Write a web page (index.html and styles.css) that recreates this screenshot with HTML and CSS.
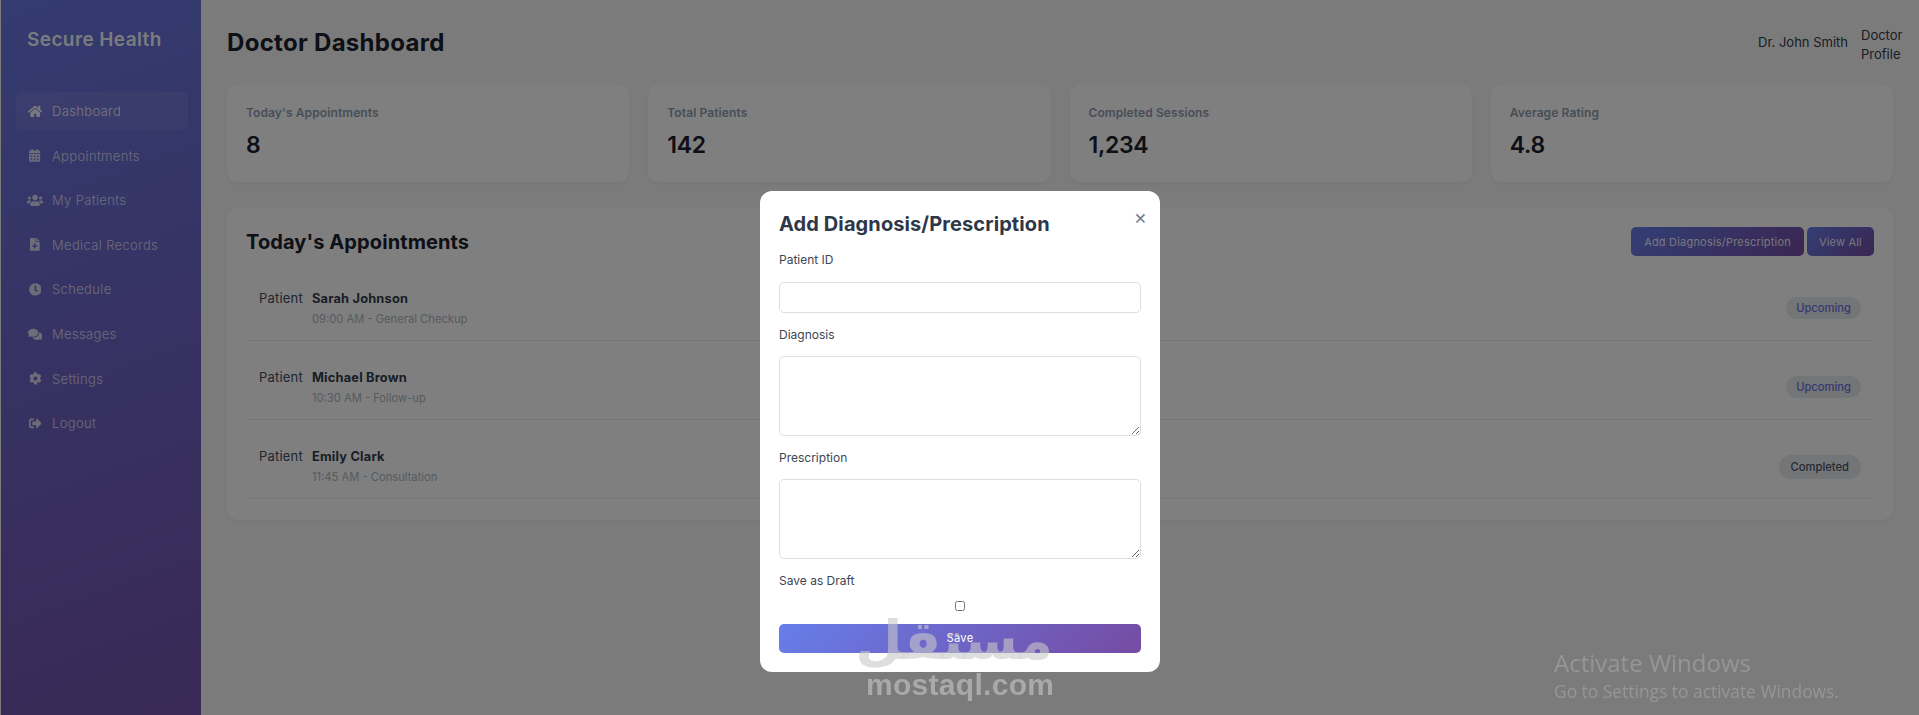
FILE: index.html

```html
<!DOCTYPE html>
<html lang="en">
<head>
  <meta charset="UTF-8" />
  <meta name="viewport" content="width=device-width, initial-scale=1.0" />
  <title>Doctor Dashboard</title>
  <link rel="stylesheet" href="styles.css">
</head>
<body>
  <div class="layout">
    <aside class="sidebar">
      <div class="logo">Secure Health</div>
      <nav class="nav">
        <a href="#" class="nav-item active">
          <span class="nav-icon"><svg viewBox="0 0 576 512"><path d="M280.37 148.26L96 300.11V464a16 16 0 0 0 16 16l112.06-.29a16 16 0 0 0 15.92-16V368a16 16 0 0 1 16-16h64a16 16 0 0 1 16 16v95.64a16 16 0 0 0 16 16.05L464 480a16 16 0 0 0 16-16V300L295.67 148.26a12.19 12.19 0 0 0-15.3 0zM571.6 251.47L488 182.56V44.05a12 12 0 0 0-12-12h-56a12 12 0 0 0-12 12v72.61L318.47 43a48 48 0 0 0-61 0L4.34 251.47a12 12 0 0 0-1.6 16.9l25.5 31A12 12 0 0 0 45.15 301l235.22-193.74a12.19 12.19 0 0 1 15.3 0L530.9 301a12 12 0 0 0 16.9-1.6l25.5-31a12 12 0 0 0-1.7-16.93z"/></svg></span>
          Dashboard
        </a>
        <a href="#" class="nav-item">
          <span class="nav-icon"><svg viewBox="0 0 448 512"><path d="M0 464c0 26.5 21.5 48 48 48h352c26.5 0 48-21.5 48-48V192H0v272zm320-196c0-6.6 5.4-12 12-12h40c6.6 0 12 5.4 12 12v40c0 6.6-5.4 12-12 12h-40c-6.6 0-12-5.4-12-12v-40zm0 128c0-6.6 5.4-12 12-12h40c6.6 0 12 5.4 12 12v40c0 6.6-5.4 12-12 12h-40c-6.6 0-12-5.4-12-12v-40zM192 268c0-6.6 5.4-12 12-12h40c6.6 0 12 5.4 12 12v40c0 6.6-5.4 12-12 12h-40c-6.6 0-12-5.4-12-12v-40zm0 128c0-6.6 5.4-12 12-12h40c6.6 0 12 5.4 12 12v40c0 6.6-5.4 12-12 12h-40c-6.6 0-12-5.4-12-12v-40zM64 268c0-6.6 5.4-12 12-12h40c6.6 0 12 5.4 12 12v40c0 6.6-5.4 12-12 12H76c-6.6 0-12-5.4-12-12v-40zm0 128c0-6.6 5.4-12 12-12h40c6.6 0 12 5.4 12 12v40c0 6.6-5.4 12-12 12H76c-6.6 0-12-5.4-12-12v-40zM400 64h-48V16c0-8.8-7.2-16-16-16h-32c-8.8 0-16 7.2-16 16v48H160V16c0-8.8-7.2-16-16-16h-32c-8.8 0-16 7.2-16 16v48H48C21.5 64 0 85.5 0 112v48h448v-48c0-26.5-21.5-48-48-48z"/></svg></span>
          Appointments
        </a>
        <a href="#" class="nav-item">
          <span class="nav-icon"><svg viewBox="0 0 640 512"><path d="M96 224c35.3 0 64-28.7 64-64s-28.7-64-64-64-64 28.7-64 64 28.7 64 64 64zm448 0c35.3 0 64-28.7 64-64s-28.7-64-64-64-64 28.7-64 64 28.7 64 64 64zm32 32h-64c-17.6 0-33.5 7.1-45.1 18.6 40.3 22.1 68.9 62 75.1 109.4h66c17.7 0 32-14.3 32-32v-32c0-35.3-28.7-64-64-64zm-256 0c61.9 0 112-50.1 112-112S381.9 32 320 32 208 82.1 208 144s50.1 112 112 112zm76.8 32h-8.3c-20.8 10-43.9 16-68.5 16s-47.6-6-68.5-16h-8.3C179.6 288 128 339.6 128 403.2V432c0 26.5 21.5 48 48 48h288c26.5 0 48-21.5 48-48v-28.8c0-63.6-51.6-115.2-115.2-115.2zm-223.7-13.4C161.5 263.1 145.6 256 128 256H64c-35.3 0-64 28.7-64 64v32c0 17.7 14.3 32 32 32h65.9c6.3-47.4 34.9-87.3 75.2-109.4z"/></svg></span>
          My Patients
        </a>
        <a href="#" class="nav-item">
          <span class="nav-icon"><svg viewBox="0 0 384 512"><path d="M377 105L279.1 7c-4.5-4.5-10.6-7-17-7H256v128h128v-6.1c0-6.3-2.5-12.4-7-16.9zm-153 31V0H24C10.7 0 0 10.7 0 24v464c0 13.3 10.7 24 24 24h336c13.3 0 24-10.7 24-24V160H248c-13.2 0-24-10.8-24-24zm64 160v48c0 4.4-3.6 8-8 8h-56v56c0 4.4-3.6 8-8 8h-48c-4.4 0-8-3.6-8-8v-56h-56c-4.4 0-8-3.6-8-8v-48c0-4.4 3.6-8 8-8h56v-56c0-4.4 3.6-8 8-8h48c4.4 0 8 3.6 8 8v56h56c4.4 0 8 3.6 8 8z"/></svg></span>
          Medical Records
        </a>
        <a href="#" class="nav-item">
          <span class="nav-icon"><svg viewBox="0 0 512 512"><path d="M256,8C119,8,8,119,8,256S119,504,256,504,504,393,504,256,393,8,256,8Zm92.49,313h0l-20,25a16,16,0,0,1-22.49,2.5h0l-67-49.72a40,40,0,0,1-15-31.23V112a16,16,0,0,1,16-16h32a16,16,0,0,1,16,16V256l58,42.5A16,16,0,0,1,348.49,321Z"/></svg></span>
          Schedule
        </a>
        <a href="#" class="nav-item">
          <span class="nav-icon"><svg viewBox="0 0 576 512"><path d="M416 192c0-88.4-93.1-160-208-160S0 103.6 0 192c0 34.3 14.1 65.9 38 92-13.4 30.2-35.5 54.2-35.8 54.5-2.2 2.3-2.8 5.7-1.5 8.7S4.8 352 8 352c36.6 0 66.9-12.3 88.7-25 32.2 15.7 70.3 25 111.3 25 114.9 0 208-71.6 208-160zm122 220c23.9-26 38-57.7 38-92 0-66.9-53.5-124.2-129.3-148.1.9 6.6 1.3 13.3 1.3 20.1 0 105.9-107.7 192-240 192-10.8 0-21.3-.8-31.7-1.9C207.8 439.6 281.8 480 368 480c41 0 79.1-9.2 111.3-25 21.8 12.7 52.1 25 88.7 25 3.2 0 6.1-1.9 7.3-4.8 1.3-2.9.7-6.3-1.5-8.7-.3-.3-22.4-24.2-35.8-54.5z"/></svg></span>
          Messages
        </a>
        <a href="#" class="nav-item">
          <span class="nav-icon"><svg viewBox="0 0 512 512"><path d="M487.4 315.7l-42.6-24.6c4.3-23.2 4.3-47 0-70.2l42.6-24.6c4.9-2.8 7.1-8.6 5.5-14-11.1-35.6-30-67.8-54.7-94.6-3.8-4.1-10-5.1-14.8-2.3L380.8 110c-17.9-15.4-38.5-27.3-60.8-35.1V25.8c0-5.6-3.9-10.5-9.4-11.7-36.7-8.2-74.3-7.8-109.2 0-5.5 1.2-9.4 6.1-9.4 11.7V75c-22.2 7.9-42.8 19.8-60.8 35.1L88.7 85.5c-4.9-2.8-11-1.9-14.8 2.3-24.7 26.7-43.6 58.9-54.7 94.6-1.7 5.4.6 11.2 5.5 14L67.3 221c-4.3 23.2-4.3 47 0 70.2l-42.6 24.6c-4.9 2.8-7.1 8.6-5.5 14 11.1 35.6 30 67.8 54.7 94.6 3.8 4.1 10 5.1 14.8 2.3l42.6-24.6c17.9 15.4 38.5 27.3 60.8 35.1v49.2c0 5.6 3.9 10.5 9.4 11.7 36.7 8.2 74.3 7.8 109.2 0 5.5-1.2 9.4-6.1 9.4-11.7v-49.2c22.2-7.9 42.8-19.8 60.8-35.1l42.6 24.6c4.9 2.8 11 1.9 14.8-2.3 24.7-26.7 43.6-58.9 54.7-94.6 1.5-5.5-.7-11.3-5.6-14.1zM256 336c-44.1 0-80-35.9-80-80s35.9-80 80-80 80 35.9 80 80-35.9 80-80 80z"/></svg></span>
          Settings
        </a>
        <a href="#" class="nav-item">
          <span class="nav-icon"><svg viewBox="0 0 512 512"><path d="M497 273L329 441c-15 15-41 4.5-41-17v-96H152c-13.3 0-24-10.7-24-24v-96c0-13.3 10.7-24 24-24h136V88c0-21.4 25.9-32 41-17l168 168c9.3 9.4 9.3 24.6 0 34zM192 436v-40c0-6.6-5.4-12-12-12H96c-17.7 0-32-14.3-32-32V160c0-17.7 14.3-32 32-32h84c6.6 0 12-5.4 12-12V76c0-6.6-5.4-12-12-12H96c-53 0-96 43-96 96v192c0 53 43 96 96 96h84c6.6 0 12-5.4 12-12z"/></svg></span>
          Logout
        </a>
      </nav>
    </aside>

    <main class="main">
      <header class="header">
        <h1>Doctor Dashboard</h1>
        <div class="user">
          <span>Dr. John Smith</span>
          <span class="user-role">Doctor Profile</span>
        </div>
      </header>

      <section class="stats">
        <div class="stat-card">
          <div class="stat-label">Today's Appointments</div>
          <div class="stat-value">8</div>
        </div>
        <div class="stat-card">
          <div class="stat-label">Total Patients</div>
          <div class="stat-value">142</div>
        </div>
        <div class="stat-card">
          <div class="stat-label">Completed Sessions</div>
          <div class="stat-value">1,234</div>
        </div>
        <div class="stat-card">
          <div class="stat-label">Average Rating</div>
          <div class="stat-value">4.8</div>
        </div>
      </section>

      <section class="panel">
        <div class="panel-head">
          <h2>Today's Appointments</h2>
          <div class="panel-actions">
            <button class="btn">Add Diagnosis/Prescription</button>
            <button class="btn btn-small">View All</button>
          </div>
        </div>

        <div class="appt">
          <span class="appt-patient">Patient</span>
          <div>
            <div class="appt-name">Sarah Johnson</div>
            <div class="appt-time">09:00 AM - General Checkup</div>
          </div>
          <span class="pill upcoming">Upcoming</span>
        </div>
        <div class="appt">
          <span class="appt-patient">Patient</span>
          <div>
            <div class="appt-name">Michael Brown</div>
            <div class="appt-time">10:30 AM - Follow-up</div>
          </div>
          <span class="pill upcoming">Upcoming</span>
        </div>
        <div class="appt">
          <span class="appt-patient">Patient</span>
          <div>
            <div class="appt-name">Emily Clark</div>
            <div class="appt-time">11:45 AM - Consultation</div>
          </div>
          <span class="pill completed">Completed</span>
        </div>
      </section>
    </main>
  </div>

  <div class="overlay">
    <div class="modal">
      <span class="modal-close">&times;</span>
      <h3>Add Diagnosis/Prescription</h3>
      <form>
        <label for="patientId">Patient ID</label>
        <input type="text" id="patientId" />
        <label for="diagnosis">Diagnosis</label>
        <textarea id="diagnosis"></textarea>
        <label for="prescription">Prescription</label>
        <textarea id="prescription"></textarea>
        <label for="draft">Save as Draft</label>
        <input type="checkbox" id="draft" class="check" />
        <button type="button" class="btn-save">Save</button>
      </form>
    </div>
  </div>

  <div class="watermark">
    <div class="watermark-ar" dir="rtl">مستقل</div>
    <div class="watermark-en">mostaql.com</div>
  </div>

  <div class="activate">
    <div class="activate-title">Activate Windows</div>
    <div class="activate-sub">Go to Settings to activate Windows.</div>
  </div>
</body>
</html>
```

FILE: styles.css

```css
* {
  box-sizing: border-box;
}

body {
  margin: 0;
  height: 715px;
  overflow: hidden;
  background-color: #f7f7f8;
  font-family: Inter, "Liberation Sans", sans-serif;
  color: #1a202c;
}

.layout {
  display: flex;
  height: 715px;
  padding-left: 1px;
}

/* sidebar */
.sidebar {
  width: 200px;
  flex-shrink: 0;
  padding: 27px 13px 26px 15px;
  background: linear-gradient(160deg, #667eea -20%, #764ba2 120%);
}

.logo {
  height: 26px;
  padding-left: 11px;
  margin-bottom: 39px;
  font-size: 19px;
  line-height: 26px;
  font-weight: 600;
  letter-spacing: 0.4px;
  color: rgba(255, 255, 255, 0.95);
}

.nav-item {
  display: flex;
  align-items: center;
  height: 38px;
  margin-bottom: 6.6px;
  padding-left: 11px;
  border-radius: 6px;
  font-size: 13px;
  font-weight: 300;
  letter-spacing: 0.35px;
  text-decoration: none;
  color: rgba(255, 255, 255, 0.75);
}

.nav-item.active {
  background: rgba(255, 255, 255, 0.07);
  color: rgba(255, 255, 255, 0.9);
}

.nav-icon {
  display: flex;
  justify-content: center;
  width: 16px;
  margin-right: 9px;
}

.nav-icon svg {
  height: 12.8px;
  fill: currentColor;
}

/* main */
.main {
  flex: 1;
  min-width: 0;
  padding: 19px 26px;
}

.header {
  display: flex;
  justify-content: space-between;
  align-items: center;
  height: 47px;
  margin-bottom: 19px;
}

.header h1 {
  margin: 0;
  font-size: 24px;
  font-weight: 700;
  letter-spacing: 0.3px;
}

.user {
  display: flex;
  align-items: center;
  gap: 13px;
  margin-right: -12px;
  font-size: 13px;
  line-height: 19px;
  color: #333c4a;
}

.user-role {
  width: 44px;
  margin-top: 4px;
}

.stats {
  display: grid;
  grid-template-columns: repeat(4, 1fr);
  gap: 19px;
  margin-bottom: 26px;
}

.stat-card {
  height: 97px;
  padding: 17px 19px;
  background: #fff;
  border-radius: 10px;
  box-shadow: 0 2px 4px rgba(0, 0, 0, 0.05);
}

.stat-label {
  margin-top: 1px;
  font-size: 12px;
  line-height: 20px;
  font-weight: 600;
  letter-spacing: 0.1px;
  color: #8f9bae;
}

.stat-value {
  margin-top: 7px;
  font-size: 23px;
  line-height: 30px;
  font-weight: 600;
  letter-spacing: -0.3px;
}

.panel {
  height: 312px;
  padding: 19px;
  background: #fff;
  border-radius: 10px;
  box-shadow: 0 2px 4px rgba(0, 0, 0, 0.05);
}

.panel-head {
  display: flex;
  justify-content: space-between;
  align-items: center;
  height: 29px;
  margin-bottom: 6px;
}

.panel-head h2 {
  margin: 0;
  font-size: 20px;
  font-weight: 700;
  letter-spacing: 0.1px;
}

.panel-actions {
  display: flex;
  gap: 3px;
}

.btn {
  height: 29px;
  padding: 0 13px;
  border: none;
  border-radius: 5px;
  background: linear-gradient(135deg, #667eea, #764ba2);
  font-family: inherit;
  font-size: 11px;
  font-weight: 400;
  letter-spacing: 0.2px;
  color: rgba(255, 255, 255, 0.9);
  cursor: pointer;
}

.btn-small {
  padding: 0 12px;
}

.appt {
  display: flex;
  align-items: flex-start;
  height: 79px;
  padding: 26px 13px 0;
  border-bottom: 1px solid #eee;
}

.appt-patient {
  width: 53px;
  flex-shrink: 0;
  font-size: 13px;
  line-height: 20px;
  letter-spacing: 0.2px;
  color: #444d5c;
}

.appt-name {
  font-size: 12.8px;
  line-height: 22px;
  font-weight: 700;
  letter-spacing: 0.2px;
  color: #333c4a;
}

.appt-time {
  font-size: 11.2px;
  line-height: 18px;
  color: #adb5c2;
}

.pill {
  margin-left: auto;
  margin-top: 9px;
  height: 22px;
  padding: 0 10px;
  border-radius: 12px;
  background: #e8eaee;
  font-size: 11.2px;
  line-height: 22px;
  font-weight: 500;
}

.pill.upcoming {
  color: #6a72e0;
}

.pill.completed {
  height: 24px;
  padding: 0 12px;
  line-height: 24px;
  color: #4a5568;
}

/* modal */
.overlay {
  position: fixed;
  inset: 0;
  display: flex;
  justify-content: center;
  align-items: flex-start;
  padding-top: 191px;
  background: rgba(0, 0, 0, 0.5);
}

.modal {
  position: relative;
  width: 400px;
  height: 481px;
  margin-left: 1px;
  padding: 19px;
  background: #fff;
  border-radius: 12px;
}

.modal-close {
  position: absolute;
  top: 12px;
  right: 13px;
  font-size: 20px;
  line-height: 28px;
  color: #718096;
}

.modal h3 {
  margin: 0 0 12px;
  font-size: 20px;
  line-height: 28px;
  font-weight: 700;
  letter-spacing: 0.1px;
  color: #2d3748;
}

.modal label {
  display: block;
  font-size: 12px;
  line-height: 20px;
  color: #3d4654;
}

.modal input[type="text"],
.modal textarea {
  display: block;
  width: 100%;
  border: 1px solid #ddd;
  border-radius: 5px;
  outline: none;
}

.modal input[type="text"] {
  height: 31px;
  margin: 12px 0;
}

.modal textarea {
  height: 80px;
  margin: 11px 0 12px;
}

.modal .check {
  display: block;
  width: 10px;
  height: 10px;
  margin: 10px auto 12.5px;
}

.btn-save {
  display: block;
  width: 100%;
  height: 29px;
  border: none;
  border-radius: 5px;
  background: linear-gradient(135deg, #667eea, #764ba2);
  font-family: inherit;
  font-size: 11.2px;
  font-weight: 400;
  letter-spacing: 0.3px;
  color: #fff;
}

/* things burned on top of the capture */
.watermark {
  position: fixed;
  left: 866px;
  top: 606px;
  width: 187px;
  text-align: center;
  color: rgba(200, 200, 200, 0.6);
  pointer-events: none;
}

.watermark-ar {
  height: 62px;
  padding-left: 8px;
  font-family: "DejaVu Sans", sans-serif;
  font-size: 54px;
  line-height: 70px;
  font-weight: 700;
}

.watermark-en {
  font-family: "Liberation Sans", sans-serif;
  font-size: 30px;
  line-height: 34px;
  font-weight: 700;
  letter-spacing: 0.3px;
}

.activate {
  position: fixed;
  left: 1554px;
  top: 648px;
  font-family: "Open Sans", sans-serif;
  color: #969696;
  pointer-events: none;
}

.activate-title {
  font-size: 24px;
  line-height: 30px;
  font-weight: 400;
}

.activate-sub {
  font-size: 17.4px;
  line-height: 27px;
  font-weight: 400;
}
```
